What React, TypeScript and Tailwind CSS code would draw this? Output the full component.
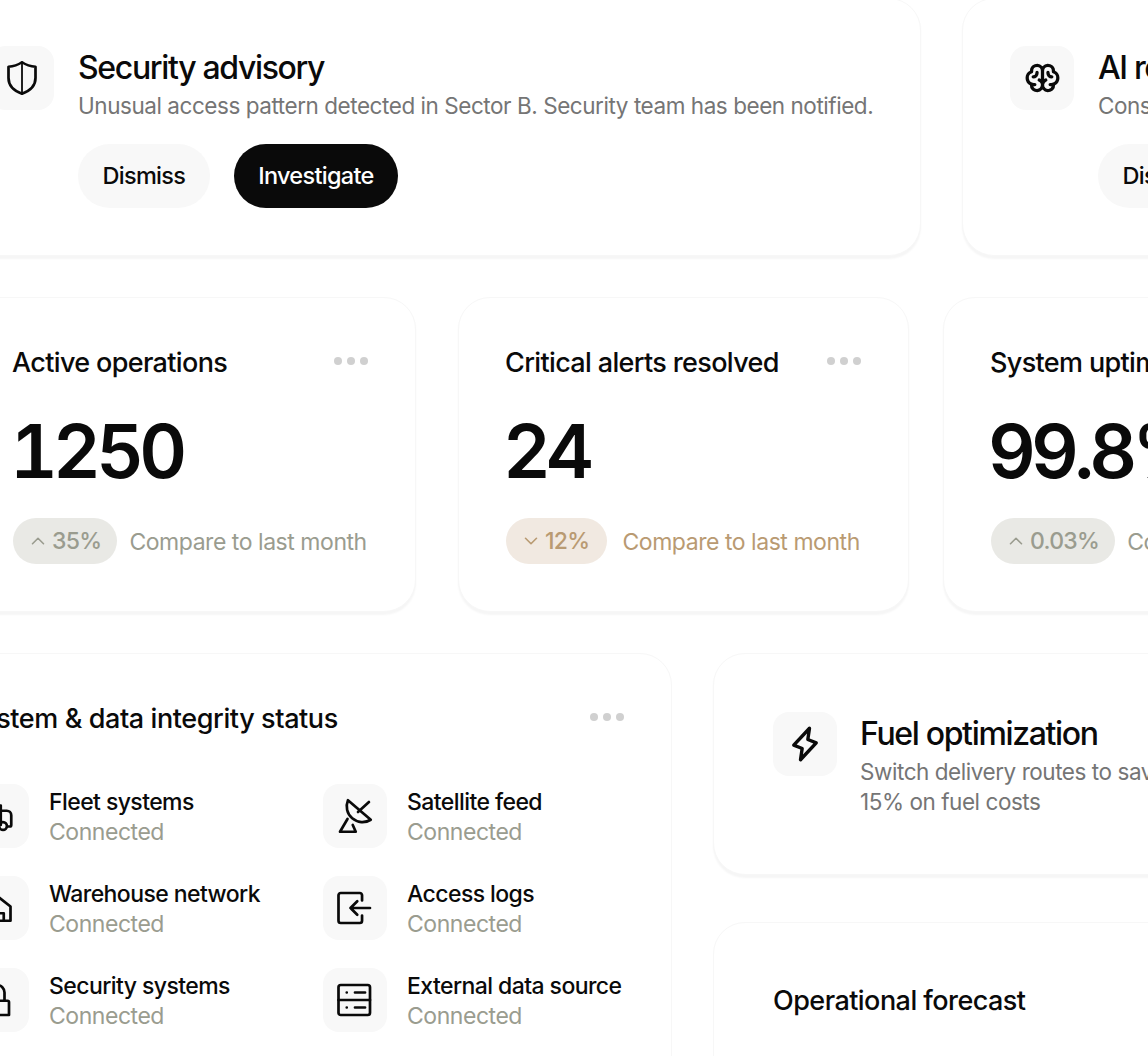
import { ChevronDown, ChevronUp } from "lucide-react";
import { PiBrainBold, PiLightningBold } from "react-icons/pi";
import type { ReactNode } from "react";

const iconProps = {
  width: 36,
  height: 36,
  viewBox: "0 0 24 24",
  fill: "none",
  stroke: "currentColor",
  strokeWidth: 1.8,
  strokeLinecap: "round" as const,
  strokeLinejoin: "round" as const,
};

function ShieldIcon() {
  return (
    <svg {...iconProps}>
      <path d="M12 1.500C9 3.500 6 4.300 3 4.500V12c0 5 3.500 8.500 9 10.500 5.500-2 9-5.500 9-10.500V4.500c-3-.2-6-1-9-3Z" />
      <path d="M12 1.500v21" strokeWidth={1.2} />
    </svg>
  );
}

function DishIcon() {
  return (
    <svg {...iconProps}>
      <path d="M7.300 1.500A10.500 10.500 0 0 0 22.500 14.500L7.300 1.500Z" />
      <path d="M14 9.300 21.300 2.700" />
      <path d="M7 14 2 22.500h10.500l-2-4.500" />
    </svg>
  );
}

function LoginIcon() {
  return (
    <svg {...iconProps}>
      <path d="M16.700 7V3.500A1.500 1.500 0 0 0 15.200 2H2.500A1.500 1.500 0 0 0 1 3.500v17A1.500 1.500 0 0 0 2.500 22h12.700a1.500 1.500 0 0 0 1.500-1.500V17" />
      <path d="M22 12H9M13.500 7.500 9 12l4.500 4.500" />
    </svg>
  );
}

function ServerIcon() {
  return (
    <svg {...iconProps}>
      <rect x="1" y="2" width="21" height="20" rx="1.500" />
      <path d="M1 12h21M6.500 7h.01M6.500 17h.01M12 7h6.700M12 17h6.700" />
    </svg>
  );
}

function TruckIcon() {
  return (
    <svg {...iconProps}>
      <path d="M3 5h11.500v13" />
      <path d="M14.500 8.500h4a3 3 0 0 1 3 3V18a1 1 0 0 1-1 1h-1.500" />
      <circle cx="16" cy="18.700" r="2.600" />
    </svg>
  );
}

function HomeIcon() {
  return (
    <svg {...iconProps}>
      <path d="M3 20.500V11l9-7 9 7v9.500H3Z" />
      <path d="M8 20.500v-5h8.500v5" />
    </svg>
  );
}

function LockIcon() {
  return (
    <svg {...iconProps}>
      <path d="M5 12.500h14a1 1 0 0 1 1 1V22H4v-8.500a1 1 0 0 1 1-1Z" />
      <path d="M7 12.500V7a5 5 0 0 1 10 0v5.500" />
    </svg>
  );
}

function Tile({ children }: { children: ReactNode }) {
  return (
    <div className="flex h-16 w-16 shrink-0 items-center justify-center rounded-2xl bg-[#f8f8f8] text-[#0a0a0a]">
      {children}
    </div>
  );
}

function Dots() {
  return (
    <div className="flex gap-[5px]">
      <span className="h-2 w-2 rounded-full bg-[#d0d0d0]" />
      <span className="h-2 w-2 rounded-full bg-[#d0d0d0]" />
      <span className="h-2 w-2 rounded-full bg-[#d0d0d0]" />
    </div>
  );
}

function Advisory({ icon, title, text, action }: { icon: ReactNode; title: string; text: string; action: string }) {
  return (
    <section className="flex h-[258px] shrink-0 gap-6 rounded-[32px] border border-[#f7f7f7] bg-white p-[47px] shadow-[0_3px_2px_#f6f6f6]">
      <Tile>{icon}</Tile>
      <div className="min-w-max">
        <h2 className="mt-px text-[32px] leading-[42px] font-medium tracking-[-0.042em] text-[#0a0a0a]">{title}</h2>
        <p className="mt-[2px] text-[22.5px] leading-[30px] tracking-[-0.02em] text-[#757575]">{text}</p>
        <div className="mt-[23px] flex gap-6">
          <button className="h-16 rounded-full bg-[#f8f8f8] px-[24.5px] text-[23.5px] font-medium tracking-[-0.03em] text-[#0a0a0a]">Dismiss</button>
          <button className="h-16 rounded-full bg-[#0a0a0a] px-[24.5px] text-[23.5px] font-medium tracking-[-0.03em] text-white">{action}</button>
        </div>
      </div>
    </section>
  );
}

function Stat({ title, value, delta, up }: { title: string; value: string; delta: string; up: boolean }) {
  const tone = up ? "text-[#9a9c8f]" : "text-[#b99a72]";
  return (
    <section className="h-[315px] w-[451px] shrink-0 rounded-[32px] border border-[#f7f7f7] bg-white p-[47px] shadow-[0_3px_2px_#f6f6f6]">
      <div className="flex items-center justify-between">
        <h3 className="-ml-px text-[27px] leading-9 font-medium whitespace-nowrap tracking-[-0.024em] text-[#0a0a0a]">{title}</h3>
        <div className="-mt-1"><Dots /></div>
      </div>
      <p className="mt-[26px] -ml-[3px] text-[74px] leading-[88px] font-semibold tracking-[-0.065em] text-[#0a0a0a] [font-feature-settings:'tnum']">{value}</p>
      <div className="mt-[23px] flex items-center gap-3 whitespace-nowrap">
        <span className={`flex h-[46px] items-center gap-[3px] rounded-full pl-[14px] text-[23px] font-medium tracking-[-0.03em] ${up ? "bg-[#e9e9e5] pr-[16px]" : "bg-[#f1e9e1] pr-[17px]"} ${tone}`}>
          {up ? <ChevronUp size={22} strokeWidth={1.75} /> : <ChevronDown size={22} strokeWidth={1.75} />}
          {delta}
        </span>
        <span className={`pt-[2px] text-[23px] tracking-[-0.02em] ${up ? "" : "ml-[4px]"} ${tone}`}>Compare to last month</span>
      </div>
    </section>
  );
}

function StatusItem({ icon, name }: { icon: ReactNode; name: string }) {
  return (
    <div className="flex items-center gap-5">
      <Tile>{icon}</Tile>
      <div className="mt-[2px] whitespace-nowrap">
        <p className="text-[23px] leading-[30px] font-medium tracking-[-0.025em] text-[#0a0a0a]">{name}</p>
        <p className="text-[23px] leading-[30px] tracking-[-0.02em] text-[#9a9c8f]">Connected</p>
      </div>
    </div>
  );
}

export default function App() {
  return (
    <main className="h-[1056px] w-[1148px] overflow-hidden bg-white font-['Inter',sans-serif]">
      <div className="-mt-[2px] -ml-[58px] flex gap-[41px]">
        <div className="w-[979px] shrink-0">
          <Advisory
            icon={<ShieldIcon />}
            title="Security advisory"
            text="Unusual access pattern detected in Sector B. Security team has been notified."
            action="Investigate"
          />
        </div>
        <Advisory
          icon={<PiBrainBold size={35} />}
          title="AI recommendation"
          text="Consider reviewing the delivery schedule for next week."
          action="Review"
        />
      </div>

      <div className="mt-[41px] -ml-[35px] flex">
        <Stat title="Active operations" value="1250" delta="35%" up />
        <div className="ml-[42px]">
          <Stat title="Critical alerts resolved" value="24" delta="12%" up={false} />
        </div>
        <div className="ml-[34px]">
          <Stat title="System uptime" value="99.8%" delta="0.03%" up />
        </div>
      </div>

      <div className="mt-[41px] -ml-[83px] flex gap-[41px]">
        <section className="h-[500px] w-[755px] shrink-0 rounded-[32px] border border-[#f7f7f7] bg-white p-[47px]">
          <div className="flex items-center justify-between">
            <h3 className="-ml-px text-[27px] leading-9 font-medium whitespace-nowrap tracking-[-0.015em] text-[#0a0a0a]">System &amp; data integrity status</h3>
            <div className="-mt-1"><Dots /></div>
          </div>
          <div className="mt-[47px] grid grid-cols-[358px_1fr] gap-y-7">
            <StatusItem icon={<TruckIcon />} name="Fleet systems" />
            <StatusItem icon={<DishIcon />} name="Satellite feed" />
            <StatusItem icon={<HomeIcon />} name="Warehouse network" />
            <StatusItem icon={<LoginIcon />} name="Access logs" />
            <StatusItem icon={<LockIcon />} name="Security systems" />
            <StatusItem icon={<ServerIcon />} name="External data source" />
          </div>
        </section>

        <div className="flex w-[700px] shrink-0 flex-col gap-[47px]">
          <section className="flex h-[222px] gap-[23px] rounded-[32px] border border-[#f7f7f7] bg-white py-[58px] pl-[59px] shadow-[0_3px_2px_#f6f6f6]">
            <Tile><PiLightningBold size={36} /></Tile>
            <div>
              <h2 className="mt-px text-[32px] leading-[42px] font-medium tracking-[-0.042em] text-[#0a0a0a]">Fuel optimization</h2>
              <p className="mt-[2px] text-[22.5px] leading-[30px] tracking-[-0.02em] text-[#757575]">
                Switch delivery routes to save
                <br />
                15% on fuel costs
              </p>
            </div>
          </section>
          <section className="h-[300px] rounded-[32px] border border-[#f7f7f7] bg-white px-[59px] pt-[60px]">
            <h3 className="text-[27px] leading-9 font-medium tracking-[-0.02em] text-[#0a0a0a]">Operational forecast</h3>
          </section>
        </div>
      </div>
    </main>
  );
}
